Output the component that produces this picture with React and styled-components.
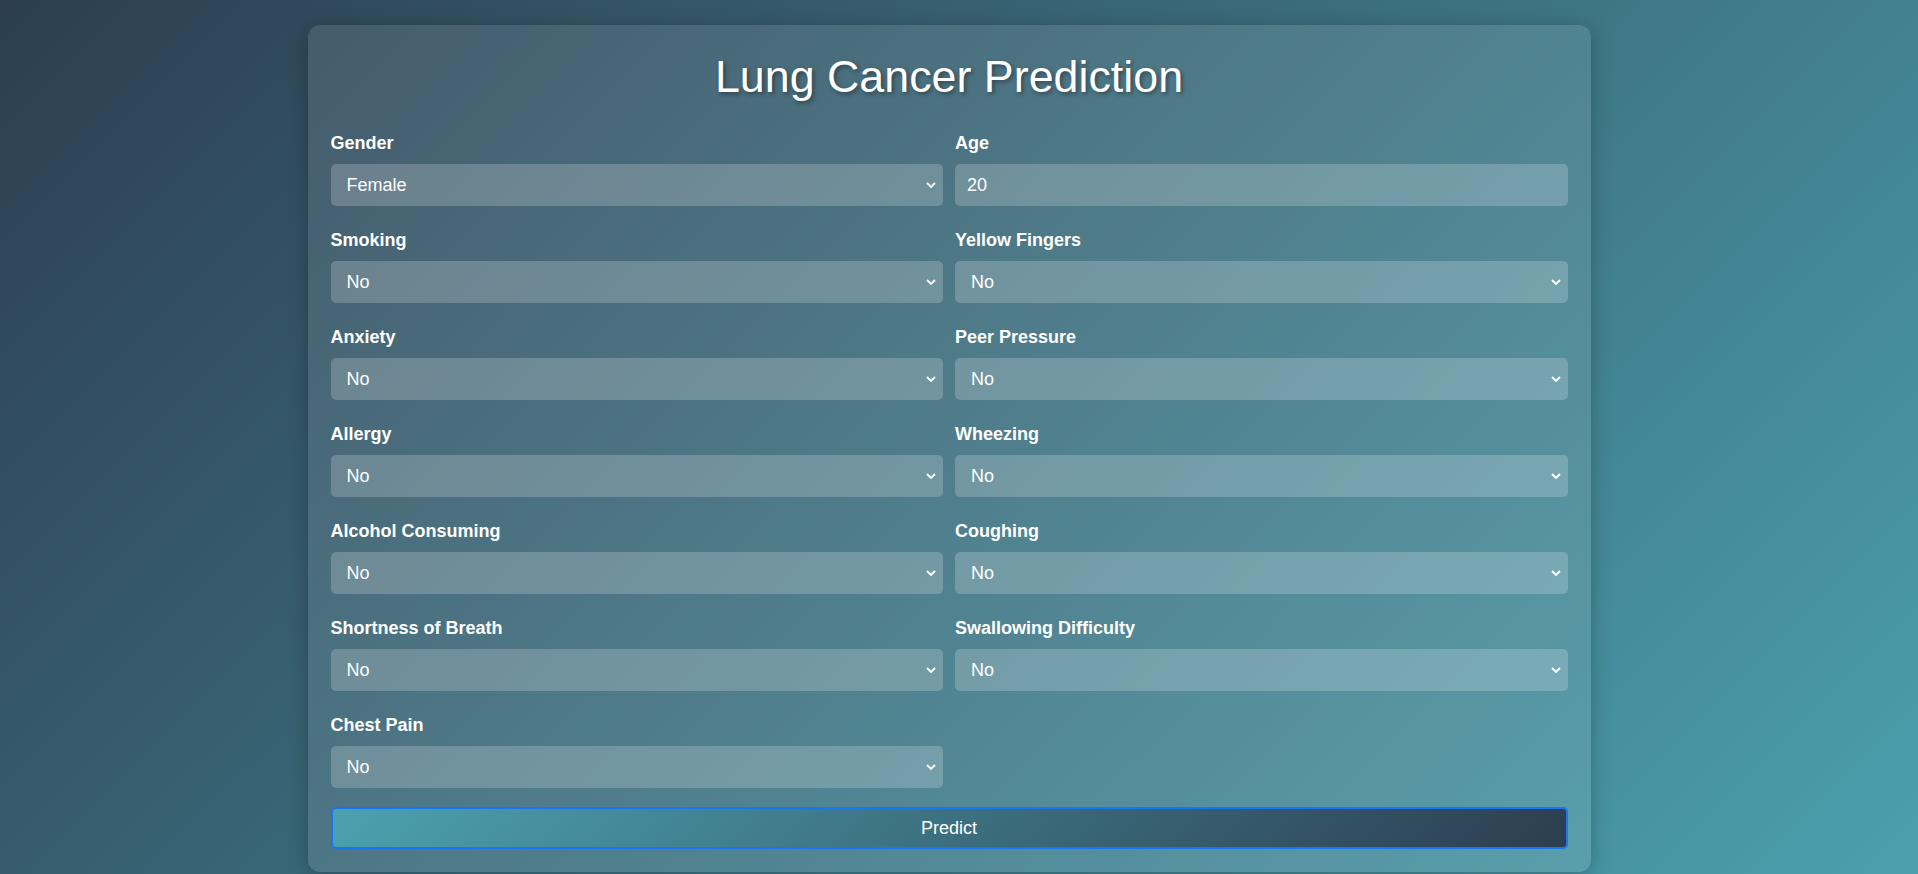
import React, { useState } from 'react';
import styled, { createGlobalStyle } from 'styled-components';

const GlobalStyle = createGlobalStyle`
  body {
    margin: 0;
    padding: 25px 20px 47px 0;
    min-height: 100vh;
    background: linear-gradient(135deg, #2c3e50, #4ca1af);
    font-family: "Liberation Sans", Arial, sans-serif;
    color: #fff;
  }

  * {
    box-sizing: border-box;
  }
`;

const yesNoFields = [
  ['smoking', 'Smoking'],
  ['yellowFingers', 'Yellow Fingers'],
  ['anxiety', 'Anxiety'],
  ['peerPressure', 'Peer Pressure'],
  ['allergy', 'Allergy'],
  ['wheezing', 'Wheezing'],
  ['alcohol', 'Alcohol Consuming'],
  ['coughing', 'Coughing'],
  ['shortnessOfBreath', 'Shortness of Breath'],
  ['swallowing', 'Swallowing Difficulty'],
  ['chestPain', 'Chest Pain'],
];

const Chevron = () => (
  <ChevronIcon width="10" height="6" viewBox="0 0 10 6">
    <path d="M1 1 L5 5 L9 1" fill="none" stroke="#fff" strokeWidth="1.8" />
  </ChevronIcon>
);

const App = () => {
  const [form, setForm] = useState({
    gender: 'F',
    age: 20,
    ...Object.fromEntries(yesNoFields.map(([key]) => [key, '1'])),
  });

  const handleChange = (e) => {
    setForm({ ...form, [e.target.name]: e.target.value });
  };

  const handleSubmit = (e) => {
    e.preventDefault();
    console.log('predict: ', form);
  };

  return (
    <>
      <GlobalStyle />
      <Card>
        <Title>Lung Cancer Prediction</Title>
        <form onSubmit={handleSubmit}>
          <FieldGrid>
            <Field>
              <Label htmlFor="gender">Gender</Label>
              <SelectWrap>
                <Select id="gender" name="gender" value={form.gender} onChange={handleChange}>
                  <option value="M">Male</option>
                  <option value="F">Female</option>
                </Select>
                <Chevron />
              </SelectWrap>
            </Field>
            <Field>
              <Label htmlFor="age">Age</Label>
              <Input id="age" name="age" type="number" value={form.age} onChange={handleChange} />
            </Field>
            {yesNoFields.map(([key, label]) => (
              <Field key={key}>
                <Label htmlFor={key}>{label}</Label>
                <SelectWrap>
                  <Select id={key} name={key} value={form[key]} onChange={handleChange}>
                    <option value="1">No</option>
                    <option value="2">Yes</option>
                  </Select>
                  <Chevron />
                </SelectWrap>
              </Field>
            ))}
          </FieldGrid>
          <PredictButton type="submit">Predict</PredictButton>
        </form>
      </Card>
    </>
  );
};

export default App;

const Card = styled.div`
  width: 1283px;
  margin: 0 auto;
  padding: 26px 23px 23px;
  background: rgba(255, 255, 255, 0.1);
  border-radius: 12px;
  box-shadow: 0 4px 20px rgba(0, 0, 0, 0.25);
`;

const Title = styled.h1`
  margin: 0 0 31px;
  text-align: center;
  font-size: 44.8px;
  font-weight: normal;
  color: #fff;
  text-shadow: 2px 2px 4px rgba(0, 0, 0, 0.4);
`;

const FieldGrid = styled.div`
  display: grid;
  grid-template-columns: 1fr 1fr;
  column-gap: 12px;
  row-gap: 24px;
`;

const Field = styled.div`
  display: flex;
  flex-direction: column;
`;

const Label = styled.label`
  display: block;
  margin-bottom: 10px;
  font-size: 18px;
  font-weight: bold;
  color: #fff;
`;

const controlStyles = `
  width: 100%;
  height: 42px;
  padding: 0 12px;
  border: none;
  border-radius: 5px;
  background: rgba(255, 255, 255, 0.2);
  color: #fff;
  font-family: "Liberation Sans", Arial, sans-serif;
  font-size: 18px;
  outline: none;
`;

const SelectWrap = styled.div`
  position: relative;
`;

const Select = styled.select`
  ${controlStyles}
  display: block;
  padding-left: 16px;
  appearance: none;

  option {
    background: #3d6b7a;
    color: #fff;
  }
`;

const ChevronIcon = styled.svg`
  position: absolute;
  right: 7px;
  top: 18px;
  pointer-events: none;
`;

const Input = styled.input`
  ${controlStyles}
`;

const PredictButton = styled.button`
  display: block;
  width: 100%;
  height: 42px;
  margin-top: 19px;
  border: 2px solid #1a75f0;
  border-radius: 5px;
  background: linear-gradient(135deg, #4ca1af, #2c3e50);
  color: #fff;
  font-family: "Liberation Sans", Arial, sans-serif;
  font-size: 18px;
  cursor: pointer;
`;
